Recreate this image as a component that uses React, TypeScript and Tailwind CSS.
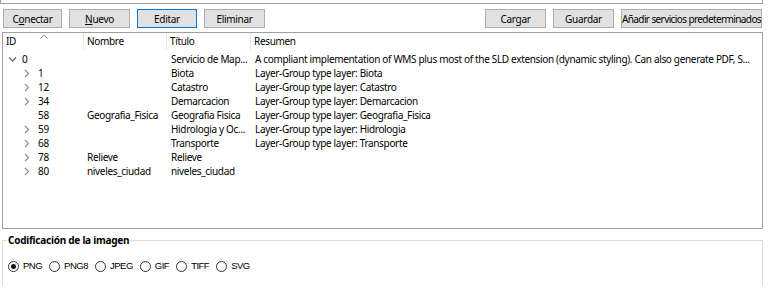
import React from 'react';

type Row = { id: string; level: number; expander: 'open' | 'closed' | null; name: string; title: string; summary: string };

const rows: Row[] = [
  { id: '0', level: 0, expander: 'open', name: '', title: 'Servicio de Map...', summary: 'A compliant implementation of WMS plus most of the SLD extension (dynamic styling). Can also generate PDF, S...' },
  { id: '1', level: 1, expander: 'closed', name: '', title: 'Biota', summary: 'Layer-Group type layer: Biota' },
  { id: '12', level: 1, expander: 'closed', name: '', title: 'Catastro', summary: 'Layer-Group type layer: Catastro' },
  { id: '34', level: 1, expander: 'closed', name: '', title: 'Demarcacion', summary: 'Layer-Group type layer: Demarcacion' },
  { id: '58', level: 1, expander: null, name: 'Geografia_Fisica', title: 'Geografia Fisica', summary: 'Layer-Group type layer: Geografia_Fisica' },
  { id: '59', level: 1, expander: 'closed', name: '', title: 'Hidrologia y Oc...', summary: 'Layer-Group type layer: Hidrologia' },
  { id: '68', level: 1, expander: 'closed', name: '', title: 'Transporte', summary: 'Layer-Group type layer: Transporte' },
  { id: '78', level: 1, expander: 'closed', name: 'Relieve', title: 'Relieve', summary: '' },
  { id: '80', level: 1, expander: 'closed', name: 'niveles_ciudad', title: 'niveles_ciudad', summary: '' },
];

const formats = ['PNG', 'PNG8', 'JPEG', 'GIF', 'TIFF', 'SVG'];

function Chevron({ open }: { open: boolean }) {
  return (
    <svg width="9" height="9" viewBox="0 0 9 9" className="shrink-0">
      {open ? (
        <path d="M1 2.5 L4.5 6 L8 2.5" fill="none" stroke="#5a5a5a" strokeWidth="1.1" />
      ) : (
        <path d="M3 1 L6.5 4.5 L3 8" fill="none" stroke="#8a8a8a" strokeWidth="1.1" />
      )}
    </svg>
  );
}

function Btn({ label, u, focused, w, small }: { label: string; u?: number; focused?: boolean; w: string; small?: boolean }) {
  return (
    <button
      className={`h-[19px] ${w} shrink-0 bg-[#e1e1e1] border ${focused ? 'border-[#0078d7]' : 'border-[#adadad]'} text-[10px] ${small ? 'tracking-[-0.6px]' : 'tracking-[-0.3px]'} leading-none text-black flex items-center justify-center whitespace-nowrap`}
    >
      {u === undefined ? label : (
        <span>
          {label.slice(0, u)}
          <span className="underline">{label[u]}</span>
          {label.slice(u + 1)}
        </span>
      )}
    </button>
  );
}

export default function App() {
  return (
    <div className="w-[768px] h-[286px] bg-white overflow-hidden text-black" style={{ fontFamily: '"Noto Sans", "Open Sans", sans-serif' }}>
      <div className="h-[4px] w-[763px] border-b border-r border-l border-[#a0a0a0]" />

      <div className="flex items-center h-[19px] mt-[5px] pl-[3px] pr-[6px]">
        <div className="flex gap-[7px]">
          <Btn label="Conectar" u={1} w="w-[59px]" />
          <Btn label="Nuevo" u={0} w="w-[61px]" />
          <Btn label="Editar" focused w="w-[60px]" />
          <Btn label="Eliminar" w="w-[61px]" />
        </div>
        <div className="flex gap-[7px] ml-auto">
          <Btn label="Cargar" w="w-[61px]" />
          <Btn label="Guardar" w="w-[61px]" />
          <Btn label="Añadir servicios predeterminados" w="w-[141px]" small />
        </div>
      </div>

      <div className="mt-[4px] ml-[2px] w-[761px] h-[197px] border border-[#a0a0a0] bg-white text-[10px] tracking-[-0.33px] overflow-hidden">
        <div className="relative flex h-[17px] items-center">
          <div className="w-[81px] pl-[3px] border-r border-[#e5e5e5] h-full flex items-center">ID</div>
          <div className="w-[83px] pl-[3px] border-r border-[#e5e5e5] h-full flex items-center">Nombre</div>
          <div className="w-[84px] pl-[3px] border-r border-[#e5e5e5] h-full flex items-center">Título</div>
          <div className="pl-[3px] h-full flex items-center">Resumen</div>
          <svg width="8" height="5" viewBox="0 0 8 5" className="absolute left-[37px] top-[1px]">
            <path d="M0.5 4.5 L4 1 L7.5 4.5" fill="none" stroke="#8a8a8a" strokeWidth="1" />
          </svg>
        </div>
        <div className="pt-[2px]">
          {rows.map((r) => (
            <div key={r.id} className="flex h-[14px] items-center whitespace-nowrap">
              <div className={`w-[81px] shrink-0 flex items-center ${r.level === 0 ? 'pl-[5px]' : 'pl-[19px]'}`}>
                <span className="w-[12px] flex items-center">{r.expander && <Chevron open={r.expander === 'open'} />}</span>
                <span className={r.level === 0 ? 'ml-[2px]' : 'ml-[4px]'}>{r.id}</span>
              </div>
              <div className="w-[84px] shrink-0 pl-[3px] overflow-hidden">{r.name}</div>
              <div className="w-[84px] shrink-0 pl-[3px] overflow-hidden">{r.title}</div>
              <div className="pl-[3px]">{r.summary}</div>
            </div>
          ))}
        </div>
      </div>

      <div className="relative mt-[11px] ml-[2px] w-[761px] h-[48px] border border-[#dcdcdc]">
        <div className="absolute -top-[8px] left-[4px] bg-white px-[1px] text-[10px] tracking-[-0.25px] font-bold leading-[14px]">
          Codificación de la imagen
        </div>
        <div className="flex items-center gap-[7px] pl-[5px] pt-[18px] text-[9.5px] tracking-[-0.5px]" style={{ fontFamily: '"Liberation Sans", sans-serif' }}>
          {formats.map((f, i) => (
            <label key={f} className="flex items-center gap-[4px]">
              <span className="w-[11px] h-[11px] rounded-full border border-[#333] bg-white flex items-center justify-center">
                {i === 0 && <span className="w-[5px] h-[5px] rounded-full bg-[#111]" />}
              </span>
              <span>{f}</span>
            </label>
          ))}
        </div>
      </div>
    </div>
  );
}
